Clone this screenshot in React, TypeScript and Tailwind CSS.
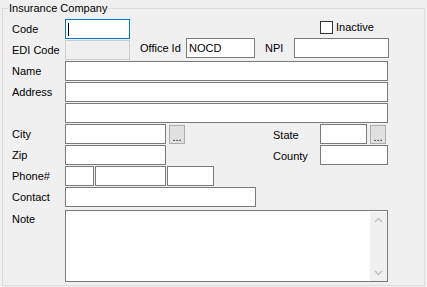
import React from "react";

const font = { fontFamily: '"Liberation Sans", Arial, sans-serif' };

function Label({ children, className = "" }: { children: React.ReactNode; className?: string }) {
  return <div className={`flex h-[20px] items-center text-[11px] leading-[13px] text-black ${className}`}>{children}</div>;
}

function Box({ className = "", children }: { className?: string; children?: React.ReactNode }) {
  return (
    <div className={`flex h-[20px] items-center border border-[#7a7a7a] bg-white pl-[2px] text-[11px] leading-[13px] text-black ${className}`}>
      {children}
    </div>
  );
}

function Dots() {
  return (
    <div className="ml-[3px] mt-[1px] flex h-[19px] w-[16px] items-end justify-center border border-[#adadad] bg-[#e1e1e1] pb-[2px] text-[11px] leading-[8px] text-black">
      ...
    </div>
  );
}

export default function App() {
  return (
    <div className="h-[287px] w-[427px] bg-[#f0f0f0] px-[2px] pt-[8px]" style={font}>
      <div className="relative h-[278px] border border-[#dcdcdc]">
        {/* group caption sits on the border */}
        <span className="absolute left-[5px] top-[-7px] bg-[#f0f0f0] px-[1px] text-[11px] leading-[13px] text-black">
          Insurance Company
        </span>

        {/* Code */}
        <div className="mt-[10px] flex h-[20px] items-start">
          <Label className="w-[62px] pl-[9px]">Code</Label>
          <div className="flex h-[20px] w-[65px] items-center border border-[#0078d7] bg-white pl-[2px]">
            <div className="h-[13px] w-[1px] bg-black" />
          </div>
          <div className="ml-[190px] mt-[2px] h-[13px] w-[13px] border border-[#333333] bg-white" />
          <div className="ml-[3px] text-[11px] leading-[16px] text-black">Inactive</div>
        </div>

        {/* EDI / Office / NPI */}
        <div className="mt-[-1px] flex h-[22px] items-start">
          <Label className="mt-[2px] w-[62px] pl-[9px]">EDI Code</Label>
          <div className="mt-[2px] h-[20px] w-[65px] border border-[#cccccc] bg-[#f0f0f0]" />
          <Label className="ml-[10px] w-[46px]">Office Id</Label>
          <Box className="w-[69px]">NOCD</Box>
          <Label className="ml-[10px] w-[29px]">NPI</Label>
          <Box className="w-[95px]" />
        </div>

        <div className="mt-[1px] flex">
          <Label className="w-[62px] pl-[9px]">Name</Label>
          <Box className="w-[323px]" />
        </div>

        <div className="mt-[1px] flex">
          <Label className="w-[62px] pl-[9px]">Address</Label>
          <Box className="w-[323px]" />
        </div>

        <div className="mt-[1px] flex">
          <div className="w-[62px]" />
          <Box className="w-[323px]" />
        </div>

        {/* City / State */}
        <div className="mt-[1px] flex h-[20px] items-start">
          <Label className="w-[62px] pl-[9px]">City</Label>
          <Box className="w-[101px]" />
          <Dots />
          <Label className="ml-[88px] mt-[1px] w-[47px]">State</Label>
          <Box className="w-[47px]" />
          <Dots />
        </div>

        {/* Zip / County */}
        <div className="mt-[1px] flex h-[20px] items-start">
          <Label className="w-[62px] pl-[9px]">Zip</Label>
          <Box className="w-[101px]" />
          <Label className="ml-[107px] mt-[1px] w-[47px]">County</Label>
          <Box className="w-[68px]" />
        </div>

        <div className="mt-[1px] flex">
          <Label className="w-[62px] pl-[9px]">Phone#</Label>
          <Box className="w-[29px]" />
          <Box className="ml-[1px] w-[71px]" />
          <Box className="ml-[1px] w-[47px]" />
        </div>

        <div className="mt-[1px] flex">
          <Label className="w-[62px] pl-[9px]">Contact</Label>
          <Box className="w-[191px]" />
        </div>

        {/* Note */}
        <div className="mt-[3px] flex items-start">
          <div className="w-[62px] pl-[9px] pt-[3px] text-[11px] leading-[13px] text-black">Note</div>
          <div className="flex h-[72px] w-[323px] justify-end border border-[#7a7a7a] bg-white">
            <div className="mb-[0px] mt-[1px] flex w-[17px] flex-col items-center justify-between bg-[#f0f0f0] py-[5px]">
              <svg width="9" height="6" viewBox="0 0 9 6">
                <path d="M1 5 L4.5 1.5 L8 5" stroke="#c2c2c2" strokeWidth="1.5" fill="none" />
              </svg>
              <svg width="9" height="6" viewBox="0 0 9 6">
                <path d="M1 1 L4.5 4.5 L8 1" stroke="#c2c2c2" strokeWidth="1.5" fill="none" />
              </svg>
            </div>
          </div>
        </div>
      </div>
    </div>
  );
}
